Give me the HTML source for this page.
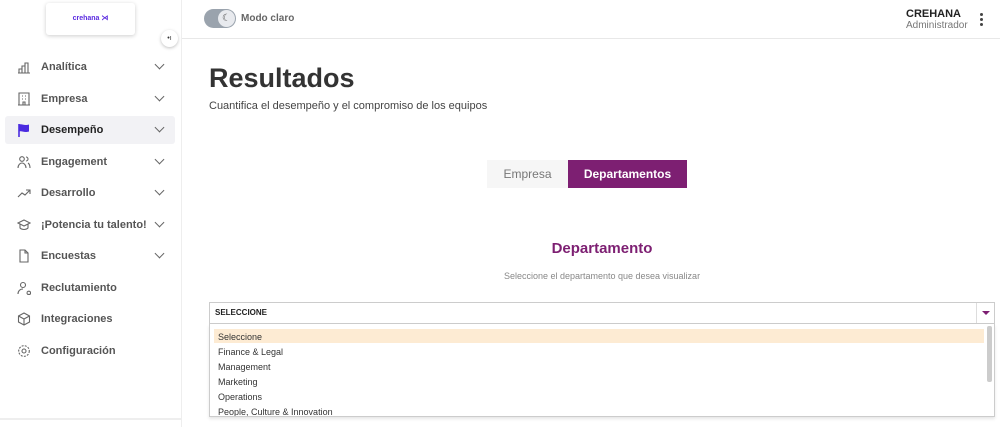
<!DOCTYPE html>
<html><head><meta charset="utf-8"><style>
*{box-sizing:border-box;margin:0;padding:0}
body{width:1000px;height:427px;overflow:hidden;background:#fff;font-family:"Liberation Sans",sans-serif;position:relative;color:#333}
.side{position:absolute;left:0;top:0;width:182px;height:427px;border-right:1px solid #eee}
.logo{position:absolute;left:46px;top:3px;width:89px;height:32px;background:#fff;border-radius:3px;box-shadow:0 1px 4px rgba(0,0,0,.2);font-size:7px;font-weight:bold;color:#5b2be0;text-align:center;line-height:32px}
.col{position:absolute;left:161px;top:30px;width:17px;height:17px;border-radius:50%;background:#fff;box-shadow:0 1px 3px rgba(0,0,0,.25);font-size:7px;text-align:center;line-height:17px;color:#333}
.it{position:absolute;left:5px;width:170px;height:28px;font-size:11px;font-weight:bold;color:#555;line-height:28px}
.it .ic{position:absolute;left:12px;top:7px;width:14px;height:14px}
.it .t{position:absolute;left:36px}
.it .ch{position:absolute;left:151px;top:8px;width:7px;height:7px;border-right:1.3px solid #666;border-bottom:1.3px solid #666;transform:rotate(45deg)}
.act{background:#f2f2f5;border-radius:3px;color:#222}
.bot{position:absolute;left:0;top:418px;width:182px;height:2px;background:#eee}
.hdr{position:absolute;left:182px;top:38px;width:818px;height:1px;background:#e8e8e8}
.tog{position:absolute;left:204px;top:9px;width:32px;height:19px;border-radius:10px;background:#9aa3ad}
.tog i{position:absolute;left:14px;top:1px;width:17px;height:17px;border-radius:50%;background:#e8eaee;font-style:normal;font-size:10px;line-height:17px;text-align:center;color:#555}
</style></head><body>
<div class="side">
<div class="logo">crehana ⋊</div>
<div class="col">•ı</div>
<div class="it" style="top:53px"><svg class="ic" viewBox="0 0 14 14" fill="none" stroke="#666" stroke-width="1.1"><path d="M1 13h12M2 13V9h3v4M5 13V6h3v7M8 13V3h3v10"/></svg><span class="t">Analítica</span><span class="ch"></span></div>
<div class="it" style="top:85px"><svg class="ic" viewBox="0 0 14 14" fill="none" stroke="#666" stroke-width="1.1"><path d="M2 1h10v12H2zM1 13h12M5 4h1M8 4h1M5 7h1M8 7h1M6 13v-3h2v3"/></svg><span class="t">Empresa</span><span class="ch"></span></div>
<div class="it act" style="top:116px"><svg class="ic" viewBox="0 0 14 14"><path d="M2 1v13" stroke="#4b2be0" stroke-width="1.6"/><path d="M2 1.5c3-1 5 1.5 10 0v7c-5 1.5-7-1-10 0z" fill="#4b2be0"/></svg><span class="t">Desempeño</span><span class="ch"></span></div>
<div class="it" style="top:148px"><svg class="ic" viewBox="0 0 14 14" fill="none" stroke="#666" stroke-width="1.1"><circle cx="5" cy="4" r="2.3"/><path d="M1 13c0-3 2-5 4-5s4 2 4 5M9 2a2 2 0 010 4M11 8c1.5 1 2 3 2 5"/></svg><span class="t">Engagement</span><span class="ch"></span></div>
<div class="it" style="top:179px"><svg class="ic" viewBox="0 0 14 14" fill="none" stroke="#666" stroke-width="1.1"><path d="M1 11l4-4 3 2 5-5M9 4h4v4"/></svg><span class="t">Desarrollo</span><span class="ch"></span></div>
<div class="it" style="top:211px"><svg class="ic" viewBox="0 0 14 14" fill="none" stroke="#666" stroke-width="1.1"><path d="M1 5l6-3 6 3-6 3zM3 6v4c2 2 6 2 8 0V6"/></svg><span class="t">¡Potencia tu talento!</span><span class="ch"></span></div>
<div class="it" style="top:242px"><svg class="ic" viewBox="0 0 14 14" fill="none" stroke="#666" stroke-width="1.1"><path d="M3 1h5l3 3v9H3zM8 1v3h3"/></svg><span class="t">Encuestas</span><span class="ch"></span></div>
<div class="it" style="top:274px"><svg class="ic" viewBox="0 0 14 14" fill="none" stroke="#666" stroke-width="1.1"><circle cx="6" cy="4" r="2.5"/><path d="M1 13c0-3 2-5 5-5M10 12a1.8 1.8 0 100-.1M11.5 13l1.5 1"/></svg><span class="t">Reclutamiento</span></div>
<div class="it" style="top:305px"><svg class="ic" viewBox="0 0 14 14" fill="none" stroke="#666" stroke-width="1.1"><path d="M7 1l5.5 3v6L7 13 1.5 10V4zM1.5 4L7 7l5.5-3M7 7v6"/></svg><span class="t">Integraciones</span></div>
<div class="it" style="top:337px"><svg class="ic" viewBox="0 0 14 14" fill="none" stroke="#666" stroke-width="1.1"><circle cx="7" cy="7" r="2"/><circle cx="7" cy="7" r="5.3" stroke-dasharray="2 1.2"/></svg><span class="t">Configuración</span></div>
<div class="bot"></div>
</div>
<div class="hdr"></div>
<div class="tog"><i>☾</i></div>
<div style="position:absolute;left:241px;top:13px;font-size:10px;font-weight:bold;color:#666">Modo claro</div>
<div style="position:absolute;left:906px;top:8px;font-size:11px;font-weight:bold;color:#222">CREHANA</div>
<div style="position:absolute;left:906px;top:20px;font-size:10px;color:#777">Administrador</div>
<div style="position:absolute;left:980px;top:13px;width:3px;font-size:0">
<div style="width:3px;height:3px;border-radius:50%;background:#444;margin-bottom:2px"></div><div style="width:3px;height:3px;border-radius:50%;background:#444;margin-bottom:2px"></div><div style="width:3px;height:3px;border-radius:50%;background:#444"></div></div>
<div style="position:absolute;left:209px;top:63px;font-size:27px;font-weight:bold;color:#333">Resultados</div>
<div style="position:absolute;left:209px;top:100px;font-size:11px;color:#444">Cuantifica el desempeño y el compromiso de los equipos</div>
<div style="position:absolute;left:487px;top:160px;width:81px;height:28px;background:#f6f6f6;color:#777;font-size:12px;text-align:center;line-height:28px">Empresa</div>
<div style="position:absolute;left:568px;top:160px;width:119px;height:28px;background:#7d1f72;color:#fff;font-size:12px;font-weight:bold;text-align:center;line-height:28px">Departamentos</div>
<div style="position:absolute;left:209px;top:240px;width:786px;text-align:center;font-size:15px;font-weight:bold;color:#7d1f72">Departamento</div>
<div style="position:absolute;left:209px;top:271px;width:786px;text-align:center;font-size:9px;color:#888">Seleccione el departamento que desea visualizar</div>
<div style="position:absolute;left:209px;top:302px;width:786px;height:22px;border:1px solid #ccc;font-size:8px;font-weight:bold;color:#222;line-height:20px;padding-left:5px">SELECCIONE
<div style="position:absolute;right:0;top:0;width:18px;height:20px;border-left:1px solid #ddd"><div style="position:absolute;left:5px;top:8px;border-left:4px solid transparent;border-right:4px solid transparent;border-top:4px solid #7d1f72"></div></div></div>
<div style="position:absolute;left:209px;top:324px;width:786px;height:93px;border:1px solid #ccc;border-top:none;box-shadow:0 2px 3px rgba(0,0,0,.1);font-size:9px;color:#333;overflow:hidden">
<div style="position:absolute;left:4px;top:5px;width:770px;height:14px;background:#fdebd3"></div>
<div style="position:absolute;right:2px;top:2px;width:5px;height:56px;background:#ccc;border-radius:2px"></div>
<div style="position:absolute;left:8px;top:6px;line-height:15.1px">Seleccione<br>Finance &amp; Legal<br>Management<br>Marketing<br>Operations<br>People, Culture &amp; Innovation</div>
</div>
</body></html>
